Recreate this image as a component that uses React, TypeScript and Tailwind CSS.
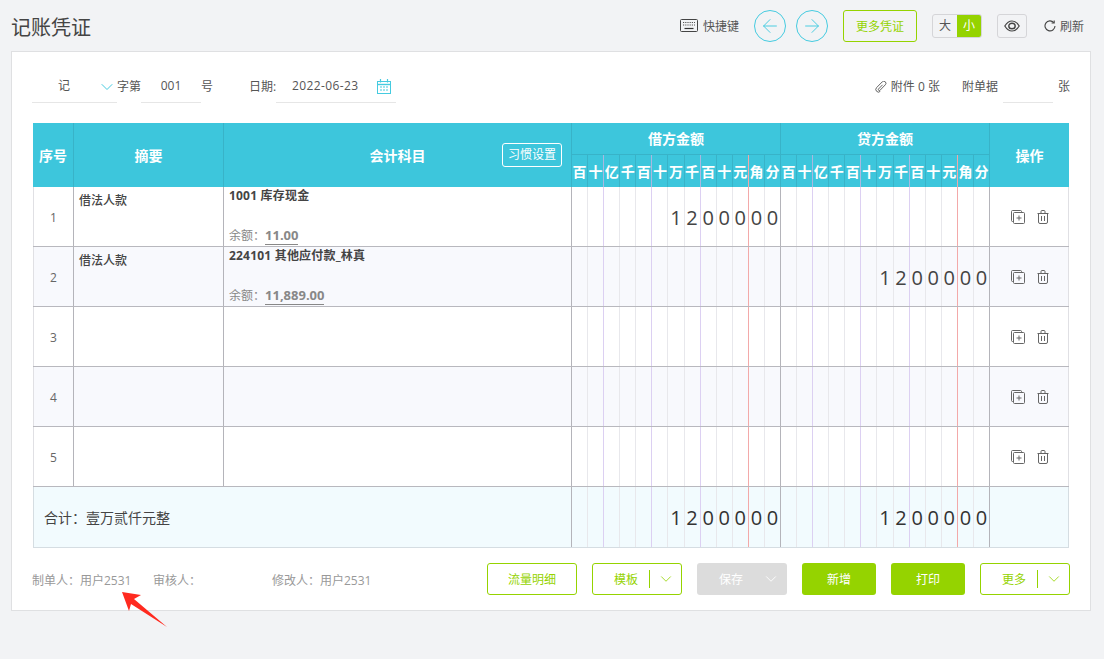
import React from "react";
import { ArrowLeft, ArrowRight, ChevronDown } from "lucide-react";

const units = ["百", "十", "亿", "千", "百", "十", "万", "千", "百", "十", "元", "角", "分"];
const AMOUNT = ["", "", "", "", "", "", "1", "2", "0", "0", "0", "0", "0"];

function lineClass(i: number, head: boolean) {
  if (i === 12) return "";
  if (head) return i === 10 ? "border-r border-r-[#f0a8a8]" : i % 3 === 1 ? "border-r border-r-[#a9b8e0]" : "border-r border-r-[#38b3c8]";
  if (i === 10) return "border-r border-r-[#f3a9a9]";
  if (i % 3 === 1) return "border-r border-r-[#dcd0f2]";
  return "border-r border-r-[#e8e8ec]";
}

function CopyIcon() {
  return (
    <svg className="h-[14px] w-[14px]" viewBox="0 0 14 14" fill="none" stroke="#666" strokeWidth="1">
      <path d="M2.5 11.5H1.5a1 1 0 0 1-1-1V1.5a1 1 0 0 1 1-1h8a1 1 0 0 1 1 1v1" />
      <rect x="2.5" y="2.5" width="11" height="11" rx="1" />
      <path d="M8 5.5v5M5.5 8h5" />
    </svg>
  );
}

function TrashIcon() {
  return (
    <svg className="h-[14px] w-[12px]" viewBox="0 0 12 14" fill="none" stroke="#666" strokeWidth="1">
      <path d="M0.5 3.5h11M4 3.5V1.5a1 1 0 0 1 1-1h2a1 1 0 0 1 1 1v2" />
      <path d="M1.5 3.5v8.5a1.5 1.5 0 0 0 1.5 1.5h6a1.5 1.5 0 0 0 1.5-1.5V3.5" />
      <path d="M4.5 6v5M7.5 6v5" />
    </svg>
  );
}

function KeyboardIcon() {
  return (
    <svg className="h-[13px] w-[18px]" viewBox="0 0 18 13" fill="none">
      <rect x="0.5" y="0.5" width="17" height="12" rx="1" stroke="#444" />
      <path d="M3 3.5h12M3 6h12" stroke="#555" strokeWidth="1.2" strokeDasharray="1.2 1" />
      <path d="M4.5 9.5h9" stroke="#333" strokeWidth="1.2" />
    </svg>
  );
}

function EyeIcon() {
  return (
    <svg className="h-[12px] w-[16px]" viewBox="0 0 16 12" fill="none" stroke="#444" strokeWidth="1.2">
      <path d="M0.8 6C3 2.4 5.4 1 8 1s5 1.4 7.2 5C13 9.6 10.6 11 8 11S3 9.6 0.8 6z" />
      <ellipse cx="8" cy="6" rx="3.2" ry="2.8" strokeWidth="1.4" />
    </svg>
  );
}

function RefreshIcon() {
  return (
    <svg className="h-[12px] w-[12px]" viewBox="0 0 12 12" fill="none" stroke="#444" strokeWidth="1.1">
      <path d="M9.8 2.6A5 5 0 1 0 11 6" />
      <path d="M10.2 0.4v2.6H7.6" />
    </svg>
  );
}

function CalendarIcon() {
  return (
    <svg className="h-[15px] w-[14px]" viewBox="0 0 14 15" fill="none" stroke="#45cbe0">
      <rect x="0.5" y="2.5" width="13" height="12" />
      <path d="M0.5 5.5h13" strokeWidth="1.4" />
      <path d="M3.5 0v3.5M10.5 0v3.5" strokeWidth="1.2" />
      <path d="M3 8h8M3 11h8" strokeWidth="1.2" strokeDasharray="2 1" />
    </svg>
  );
}

function LinkIcon() {
  return (
    <svg className="h-[12px] w-[12px]" viewBox="0 0 12 12" fill="none" stroke="#555" strokeWidth="0.9">
      <path d="M7.6 3.8 3.5 8a1 1 0 0 0 1.4 1.4l5.4-5.6a2.1 2.1 0 0 0-3-3L1.6 6.6a2.6 2.6 0 0 0 3.7 3.7" />
    </svg>
  );
}

function AmountCols({ digits, dark }: { digits?: boolean; dark?: boolean }) {
  return (
    <div className="flex h-full w-[209px] shrink-0 border-r border-r-[#b4b4ba]">
      {units.map((_, i) => (
        <div
          key={i}
          className={`flex min-w-0 flex-1 items-center justify-center pt-[2px] text-[20px] ${dark ? "text-[#333]" : "text-[#444]"} ${lineClass(i, false)}`}
        >
          {digits ? AMOUNT[i] : ""}
        </div>
      ))}
    </div>
  );
}

function HeadAmount({ title }: { title: string }) {
  return (
    <div className="flex h-full w-[209px] shrink-0 flex-col border-r border-r-[#38b3c8]">
      <div className="flex h-[32px] items-center justify-center border-b border-b-[#38b3c8] text-[14px] font-bold">{title}</div>
      <div className="flex flex-1">
        {units.map((u, i) => (
          <div key={i} className={`flex min-w-0 flex-1 items-center justify-center pt-[1px] text-[14px] font-bold ${lineClass(i, true)}`}>
            {u}
          </div>
        ))}
      </div>
    </div>
  );
}

function Row({ n, alt, summary, code, balance, debit, credit }: { n: number; alt?: boolean; summary?: string; code?: string; balance?: string; debit?: boolean; credit?: boolean }) {
  return (
    <div className={`flex h-[60px] border-b border-b-[#b8b8be] ${alt ? "bg-[#f8f9fd]" : "bg-white"}`}>
      <div className="flex w-[41px] shrink-0 items-center justify-center border-r border-r-[#b4b4ba] border-l border-l-[#e0e0e4] pt-[2px] text-[12px] text-[#666]">{n}</div>
      <div className="w-[150px] shrink-0 border-r border-r-[#b4b4ba] pl-[5px] pt-[4px] text-[12px] font-medium leading-[20px] text-[#444]">{summary}</div>
      <div className="flex w-[348px] shrink-0 flex-col border-r border-r-[#b4b4ba] pl-[5px] text-[#444]">
        {code && (
          <>
            <div className="h-[30px] text-[12px] font-bold leading-[18px] tracking-[0.2px]">{code}</div>
            <div className="flex h-[28px] items-end text-[12px] leading-[18px] text-[#888]">
              <span>余额：</span>
              <span className="border-b border-b-[#888] text-[13px] font-bold leading-[17px] text-[#888]">{balance}</span>
            </div>
          </>
        )}
      </div>
      <AmountCols digits={debit} />
      <AmountCols digits={credit} />
      <div className="flex flex-1 items-center justify-center gap-[12px] border-r border-r-[#e0e0e4] pl-[1px] pt-[1px]">
        <CopyIcon />
        <TrashIcon />
      </div>
    </div>
  );
}

function SplitBtn({ label }: { label: string }) {
  return (
    <button className="flex h-[32px] w-[90px] items-center rounded-[3px] border border-[#95d300] bg-white text-[12px] text-[#95d300]">
      <span className="flex-1 pl-[10px] pt-[1px] text-center">{label}</span>
      <span className="h-[18px] border-l border-l-[#95d300]" />
      <span className="flex w-[31px] items-center justify-center">
        <ChevronDown className="h-[18px] w-[18px]" strokeWidth={1.1} />
      </span>
    </button>
  );
}

export default function App() {
  return (
    <div
      className="relative h-[659px] w-[1104px] overflow-hidden bg-[#f2f3f5] text-[12px] text-[#555]"
      style={{ fontFamily: '"Open Sans", "Noto Sans CJK SC", sans-serif' }}
    >
      {/* Top bar */}
      <div className="flex h-[51px] items-center pl-[11px] pr-[20px]">
        <div className="pt-[4px] text-[20px] text-[#444]">记账凭证</div>
        <div className="ml-auto flex items-center">
          <KeyboardIcon />
          <span className="ml-[5px] pt-[2px]">快捷键</span>
          <button className="ml-[15px] flex h-[32px] w-[32px] items-center justify-center rounded-full border border-[#45cbe0] text-[#45cbe0]">
            <ArrowLeft className="h-[22px] w-[22px]" strokeWidth={1.05} />
          </button>
          <button className="ml-[10px] flex h-[32px] w-[32px] items-center justify-center rounded-full border border-[#45cbe0] text-[#45cbe0]">
            <ArrowRight className="h-[22px] w-[22px]" strokeWidth={1.05} />
          </button>
          <button className="ml-[15px] flex h-[32px] w-[74px] items-center justify-center rounded-[3px] border border-[#95d300] pt-[2px] text-[12px] text-[#95d300]">更多凭证</button>
          <div className="ml-[15px] flex h-[24px] w-[50px] overflow-hidden rounded-[3px] border border-[#d5d5d8]">
            <span className="flex flex-1 items-center justify-center pt-[1px]">大</span>
            <span className="flex flex-1 items-center justify-center bg-[#95d300] pt-[1px] text-white">小</span>
          </div>
          <button className="ml-[15px] flex h-[24px] w-[30px] items-center justify-center rounded-[3px] border border-[#d5d5d8]">
            <EyeIcon />
          </button>
          <span className="ml-[17px]"><RefreshIcon /></span>
          <span className="ml-[4px] pt-[2px]">刷新</span>
        </div>
      </div>

      {/* Card */}
      <div className="ml-[11px] h-[560px] w-[1080px] border border-[#dfe0e2] bg-white px-[21px]">
        {/* Form row */}
        <div className="-ml-[1px] flex h-[51px] items-end">
          <div className="relative flex h-[36px] w-[85px] items-center border-b border-b-[#e6e6e6] pt-[3px]">
            <span className="ml-[26px]">记</span>
            <ChevronDown className="absolute right-0 top-[10px] h-[20px] w-[20px] text-[#45cbe0]" strokeWidth={1.2} />
          </div>
          <span className="flex h-[36px] w-[24px] items-center whitespace-nowrap pt-[3px]">字第</span>
          <div className="flex h-[36px] w-[60px] items-center justify-center border-b border-b-[#e6e6e6] pt-[3px]">001</div>
          <span className="flex h-[36px] items-center pt-[3px]">号</span>
          <span className="ml-[36px] flex h-[36px] w-[27px] items-center whitespace-nowrap pt-[3px]">日期:</span>
          <div className="flex h-[36px] w-[120px] items-center border-b border-b-[#e6e6e6] pl-[16px] pt-[3px]">
            <span className="tracking-[0.4px]">2022-06-23</span>
            <span className="ml-[18px]"><CalendarIcon /></span>
          </div>
          <div className="-mr-[1px] ml-auto flex h-[36px] items-center">
            <span className="pt-[3px]"><LinkIcon /></span>
            <span className="ml-[4px] pt-[3px]">附件 0 张</span>
            <span className="ml-[22px] pt-[3px]">附单据</span>
            <span className="ml-[5px] h-[36px] w-[50px] border-b border-b-[#e6e6e6]" />
            <span className="ml-[5px] pt-[3px]">张</span>
          </div>
        </div>

        {/* Table */}
        <div className="mt-[20px] w-[1036px]">
          <div className="flex h-[64px] bg-[#3dc6dc] text-white">
            <div className="flex w-[41px] shrink-0 items-center justify-center border-r border-r-[#38b3c8] text-[14px] font-bold">序号</div>
            <div className="flex w-[150px] shrink-0 items-center justify-center border-r border-r-[#38b3c8] text-[14px] font-bold">摘要</div>
            <div className="relative flex w-[348px] shrink-0 items-center justify-center border-r border-r-[#38b3c8] text-[14px] font-bold">
              会计科目
              <span className="absolute right-[9px] top-[20px] flex h-[24px] w-[60px] items-center justify-center rounded-[3px] border border-white text-[12px] font-normal">习惯设置</span>
            </div>
            <HeadAmount title="借方金额" />
            <HeadAmount title="贷方金额" />
            <div className="flex flex-1 items-center justify-center text-[14px] font-bold">操作</div>
          </div>
          <Row n={1} summary="借法人款" code="1001 库存现金" balance="11.00" debit />
          <Row n={2} alt summary="借法人款" code="224101 其他应付款_林真" balance="11,889.00" credit />
          <Row n={3} />
          <Row n={4} alt />
          <Row n={5} />
          <div className="flex h-[61px] border-b border-b-[#d5dde2] bg-[#f2fbfe]">
            <div className="flex w-[539px] shrink-0 items-center border-r border-r-[#b4b4ba] border-l border-l-[#d5dde2] pl-[10px] text-[14px] text-[#444]">合计：壹万贰仟元整</div>
            <AmountCols digits dark />
            <AmountCols digits dark />
            <div className="flex-1 border-r border-r-[#d5dde2]" />
          </div>
        </div>

        {/* Footer */}
        <div className="mt-[15px] flex h-[32px] items-center text-[#999]">
          <span className="-ml-[1px] w-[121px] whitespace-nowrap pt-[3px]">制单人：用户2531</span>
          <span className="w-[119px] whitespace-nowrap pt-[3px]">审核人：</span>
          <span className="whitespace-nowrap pt-[3px]">修改人：用户2531</span>
          <div className="-mr-[1px] ml-auto flex items-center gap-[15px]">
            <button className="flex h-[32px] w-[90px] items-center justify-center rounded-[3px] border border-[#95d300] bg-white pt-[1px] text-[#95d300]">流量明细</button>
            <SplitBtn label="模板" />
            <button className="flex h-[32px] w-[90px] items-center rounded-[3px] bg-[#dcdcdc] text-white">
              <span className="flex-1 pl-[10px] pt-[1px] text-center">保存</span>
              <span className="flex w-[32px] items-center justify-center">
                <ChevronDown className="h-[18px] w-[18px]" strokeWidth={1.2} />
              </span>
            </button>
            <button className="flex h-[32px] w-[74px] items-center justify-center rounded-[3px] bg-[#95d300] pt-[1px] text-white">新增</button>
            <button className="flex h-[32px] w-[74px] items-center justify-center rounded-[3px] bg-[#95d300] pt-[1px] text-white">打印</button>
            <SplitBtn label="更多" />
          </div>
        </div>
      </div>

      {/* Red annotation arrow */}
      <svg className="absolute left-[118px] top-[588px] h-[42px] w-[52px]" viewBox="118 588 52 42">
        <polygon points="122,592 141,595 134,599 167,627 131,604 129,611" fill="#ff2a1f" />
      </svg>
    </div>
  );
}
